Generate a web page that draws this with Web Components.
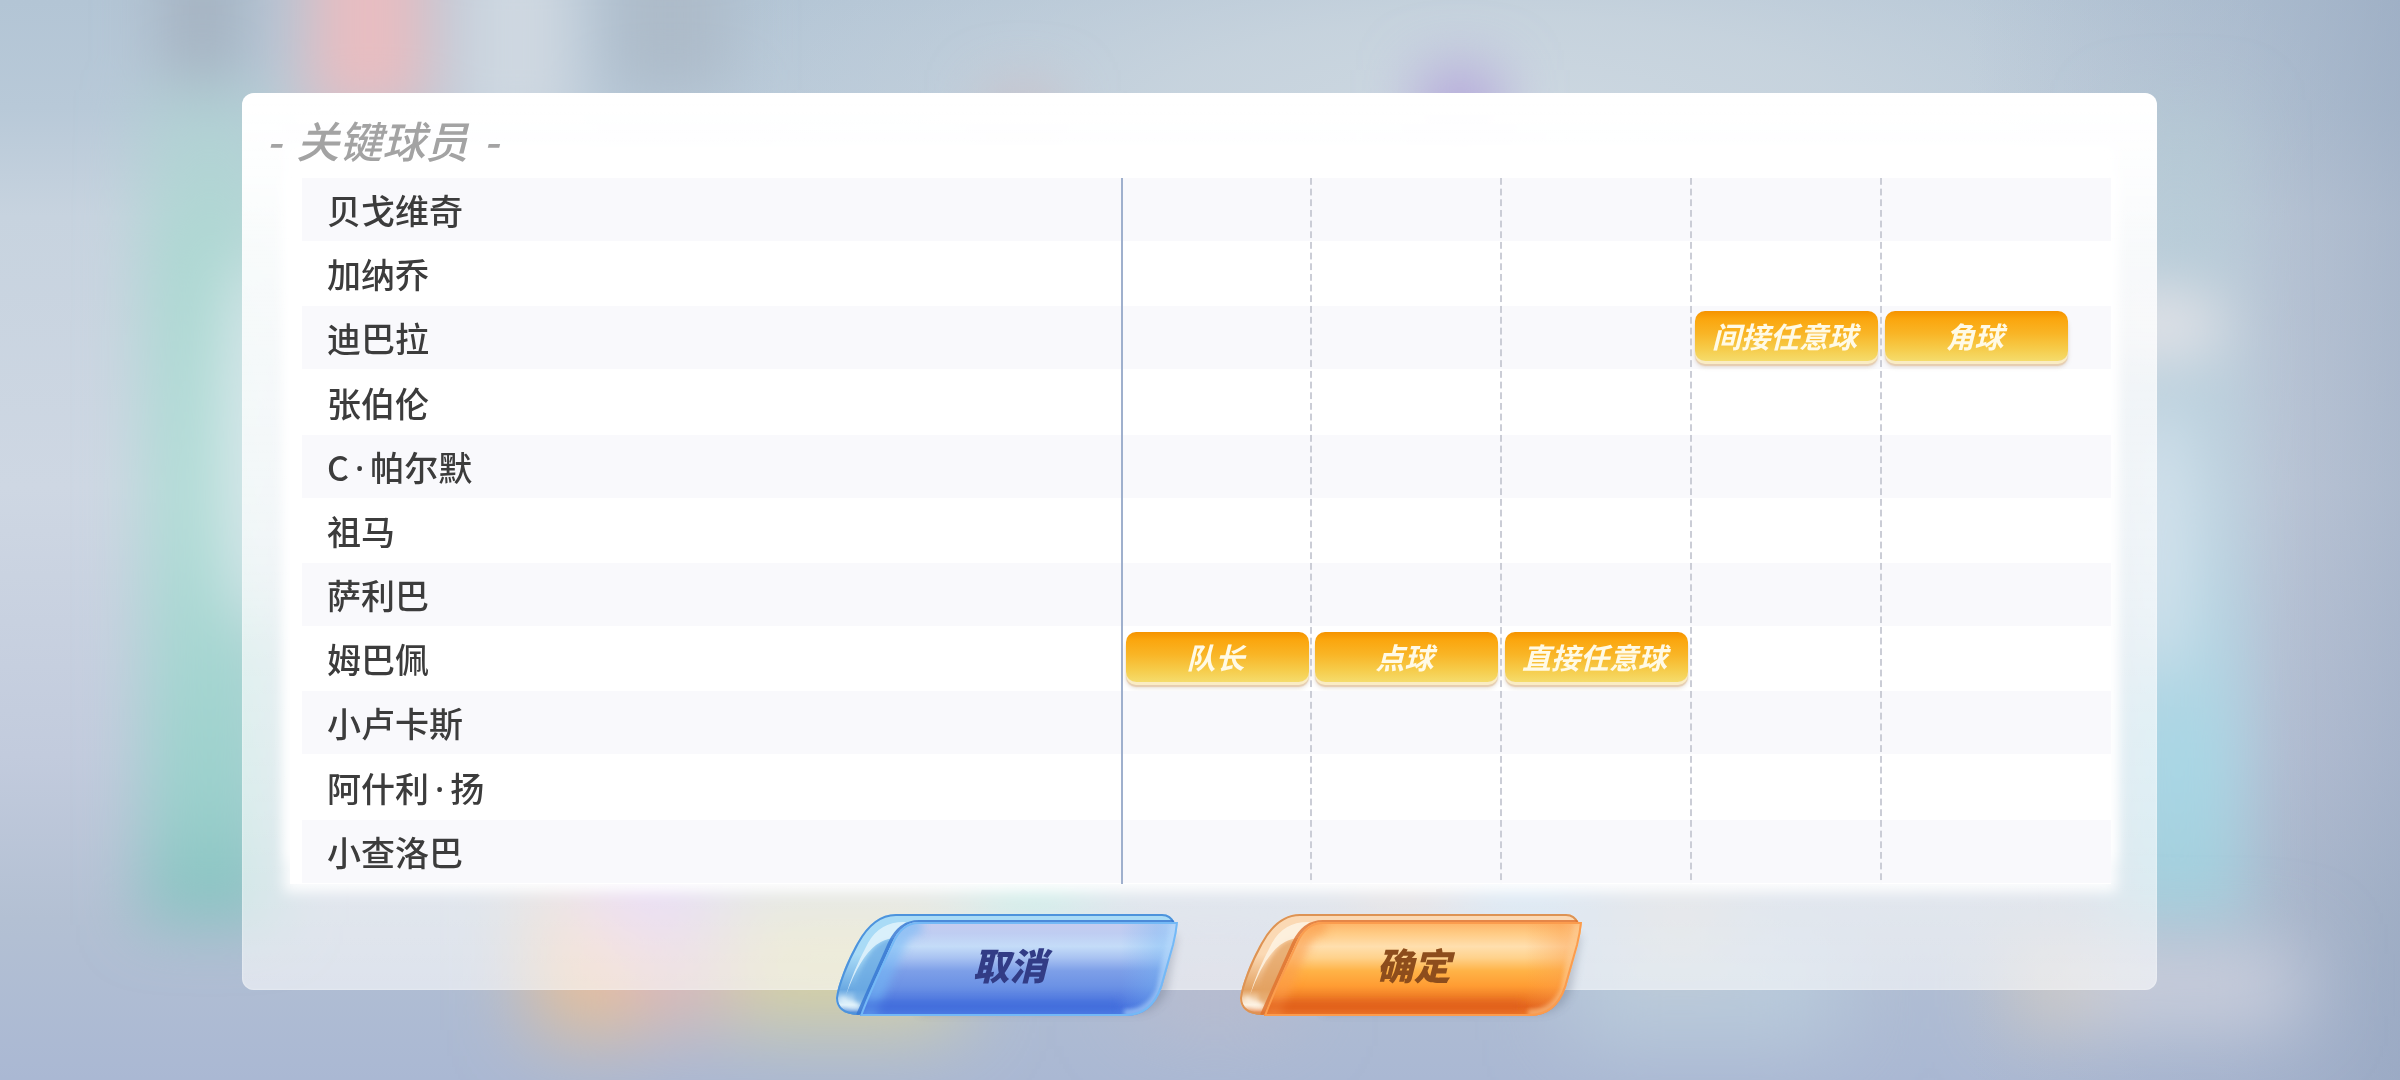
<!DOCTYPE html>
<html lang="zh-CN">
<head>
<meta charset="utf-8">
<meta name="viewport" content="width=device-width, initial-scale=1">
<title>关键球员</title>
<style>
    * { box-sizing: border-box; }

    body {
        margin: 0;
        min-height: 100vh;
        display: flex;
        background: #b9c5d7;
        font-family: "Noto Sans CJK SC", "Noto Sans", sans-serif;
        color: #3c3c3c;
    }

    main {
        flex: 1;
        display: flex;
        padding: 93px 243px 90px 242px;
    }
</style>
</head>
<body>
<blurred-backdrop></blurred-backdrop>
<main>
    <dialog-panel>
        <h2 slot="title"><span>-</span> <span>关键球员</span> <span>-</span></h2>
        <player-roles></player-roles>
        <glass-button slot="actions" tone="blue">取消</glass-button>
        <glass-button slot="actions" tone="orange">确定</glass-button>
    </dialog-panel>
</main>

<script>
    // Soft colour blobs behind the dialog
    class BlurredBackdrop extends HTMLElement {
        constructor() {
            super();
            this.attachShadow({ mode: 'open' });
            this.shadowRoot.innerHTML = `
                <style>
                    :host {
                        display: block;
                        position: fixed;
                        inset: 0;
                        z-index: -1;
                        overflow: hidden;
                    }

                    svg {
                        display: block;
                        width: 100%;
                        height: 100%;
                    }
                </style>
                <svg viewBox="0 0 2400 1080" preserveAspectRatio="none" aria-hidden="true">
                    <defs>
                        <linearGradient id="base" x1="0" y1="0" x2="0" y2="1">
                            <stop offset="0" stop-color="#b3c5d5"/>
                            <stop offset=".1" stop-color="#b8c9d8"/>
                            <stop offset=".2" stop-color="#c7d3df"/>
                            <stop offset=".45" stop-color="#ced7e3"/>
                            <stop offset=".7" stop-color="#c2cbdd"/>
                            <stop offset=".85" stop-color="#b3c0d3"/>
                            <stop offset="1" stop-color="#aab8d3"/>
                        </linearGradient>
                        <linearGradient id="shade" x1="0" y1="0" x2="1" y2="0">
                            <stop offset=".82" stop-color="#98a6bf" stop-opacity="0"/>
                            <stop offset=".93" stop-color="#98a6bf" stop-opacity=".3"/>
                            <stop offset="1" stop-color="#8f9fb9" stop-opacity=".55"/>
                        </linearGradient>
                        <radialGradient id="light">
                            <stop offset="0" stop-color="#cdd8e1"/>
                            <stop offset=".4" stop-color="#c8d4de" stop-opacity=".9"/>
                            <stop offset="1" stop-color="#c4d0dc" stop-opacity="0"/>
                        </radialGradient>
                        <linearGradient id="teal" x1="0" y1="0" x2="0" y2="1">
                            <stop offset="0" stop-color="#acd4d0" stop-opacity=".5"/>
                            <stop offset=".2" stop-color="#acd8d2" stop-opacity=".95"/>
                            <stop offset=".5" stop-color="#b2dcd7"/>
                            <stop offset=".85" stop-color="#9bd0cc"/>
                            <stop offset="1" stop-color="#86c0c0"/>
                        </linearGradient>
                        <linearGradient id="cyan" x1="0" y1="0" x2="0" y2="1">
                            <stop offset="0" stop-color="#b4cdd5" stop-opacity=".4"/>
                            <stop offset=".5" stop-color="#bdd5e2" stop-opacity=".9"/>
                            <stop offset=".8" stop-color="#a9d7e5"/>
                            <stop offset="1" stop-color="#a2ccda"/>
                        </linearGradient>
                        <filter id="b30" x="-100%" y="-100%" width="300%" height="300%"><feGaussianBlur stdDeviation="30"/></filter>
                        <filter id="b40" x="-100%" y="-100%" width="300%" height="300%"><feGaussianBlur stdDeviation="40"/></filter>
                    </defs>
                    <rect width="2400" height="1080" fill="url(#base)"/>
                    <ellipse cx="1500" cy="120" rx="850" ry="260" fill="url(#light)"/>
                    <rect width="2400" height="1080" fill="url(#shade)"/>
                    <g filter="url(#b30)">
                        <rect x="142" y="90" width="135" height="835" fill="url(#teal)"/>
                        <ellipse cx="254" cy="440" rx="26" ry="190" fill="#dcebee"/>
                        <rect x="160" y="-60" width="85" height="140" fill="#a6b4c2"/>
                        <rect x="308" y="-90" width="122" height="205" fill="#e8bdc1"/>
                        <rect x="460" y="-60" width="115" height="200" fill="#cfd8e1"/>
                        <rect x="610" y="-60" width="120" height="150" fill="#adbbc9"/>
                        <rect x="990" y="90" width="65" height="60" fill="#cbbdc4"/>
                        <rect x="1422" y="70" width="76" height="80" fill="#b2a2da"/>
                        <rect x="2110" y="100" width="135" height="830" fill="url(#cyan)"/>
                        <ellipse cx="2162" cy="325" rx="64" ry="28" fill="#e8e6ea"/>
                        <ellipse cx="2160" cy="540" rx="24" ry="140" fill="#d8e6f0"/>
                    </g>
                    <g filter="url(#b40)">
                        <rect x="535" y="880" width="125" height="150" fill="#ecc090"/>
                        <rect x="640" y="930" width="110" height="90" fill="#dcb8b8"/>
                        <rect x="590" y="820" width="110" height="120" fill="#cbaeec"/>
                        <rect x="730" y="900" width="230" height="125" fill="#d8d2a2"/>
                        <rect x="980" y="820" width="100" height="100" fill="#86e2ca"/>
                        <rect x="1140" y="960" width="150" height="60" fill="#bcbccd"/>
                        <rect x="1370" y="850" width="70" height="60" fill="#e6c3ae"/>
                        <rect x="1470" y="830" width="100" height="100" fill="#aed2ee"/>
                        <rect x="1570" y="930" width="270" height="110" fill="#b9cbdc"/>
                        <rect x="1640" y="870" width="80" height="90" fill="#c9c9c9"/>
                        <rect x="2010" y="945" width="90" height="80" fill="#d6cdc2"/>
                        <rect x="2090" y="950" width="210" height="70" fill="#d0d3df"/>
                    </g>
                </svg>
            `;
        }
    }

    // White glass sheet with a title, a body and an action row that hangs over its lower edge
    class DialogPanel extends HTMLElement {
        constructor() {
            super();
            this.attachShadow({ mode: 'open' });
            this.shadowRoot.innerHTML = `
                <style>
                    :host {
                        flex: 1;
                        min-width: 0;
                        display: flex;
                        flex-direction: column;
                        border-radius: 12px;
                        background: linear-gradient(
                            rgba(255, 255, 255, 1) 0%,
                            rgba(255, 255, 255, .96) 10%,
                            rgba(255, 255, 255, .78) 30%,
                            rgba(255, 255, 255, .66) 60%,
                            rgba(255, 255, 255, .58) 100%
                        );
                        box-shadow: inset 0 0 2px rgba(255, 255, 255, .7);
                    }

                    header {
                        box-sizing: border-box;
                        position: relative;
                        z-index: 1;
                        display: flex;
                        align-items: center;
                        height: 85px;
                        padding: 6px 24px 0;
                    }

                    ::slotted(h2) {
                        display: flex;
                        gap: 15px;
                        margin: 0;
                        font-size: 43px;
                        line-height: 56px;
                        font-weight: 500;
                        font-style: italic;
                        color: #a3a3a3;
                    }

                    .body {
                        flex: 1;
                        display: grid;
                        margin: 0 46px 0 48px;
                        padding-left: 12px;
                        background: #fff;
                        box-shadow: 0 2px 12px 6px rgba(255, 255, 255, .9), 0 -28px 12px 4px #fff;
                    }

                    footer {
                        display: flex;
                        justify-content: center;
                        gap: 60px;
                        margin: 27px 0 -27px;
                        padding-left: 16px;
                    }
                </style>
                <header><slot name="title"></slot></header>
                <div class="body"><slot></slot></div>
                <footer><slot name="actions"></slot></footer>
            `;
        }
    }

    class PlayerRoles extends HTMLElement {
        static roles = ['队长', '点球', '直接任意球', '间接任意球', '角球'];

        static players = [
            { name: '贝戈维奇', roles: [] },
            { name: '加纳乔', roles: [] },
            { name: '迪巴拉', roles: ['间接任意球', '角球'] },
            { name: '张伯伦', roles: [] },
            { name: 'C·帕尔默', roles: [] },
            { name: '祖马', roles: [] },
            { name: '萨利巴', roles: [] },
            { name: '姆巴佩', roles: ['队长', '点球', '直接任意球'] },
            { name: '小卢卡斯', roles: [] },
            { name: '阿什利·扬', roles: [] },
            { name: '小查洛巴', roles: [] }
        ];

        constructor() {
            super();
            this.attachShadow({ mode: 'open' });
            this.shadowRoot.innerHTML = `
                <style>
                    :host {
                        display: grid;
                        min-width: 0;
                    }

                    table {
                        width: 100%;
                        table-layout: fixed;
                        border-collapse: collapse;
                    }

                    .role { width: 190px; }
                    .role:nth-child(2) { width: 189px; }
                    .role:last-child { width: 231px; }

                    th, td {
                        height: 64px;
                        padding: 0;
                        vertical-align: middle;
                    }

                    tr:nth-child(odd) {
                        background: linear-gradient(#f9f9fc, #f9f9fc) top / 100% 63px no-repeat;
                    }

                    th {
                        padding-left: 25px;
                        text-align: left;
                        font-size: 34px;
                        line-height: 48px;
                        font-weight: 500;
                    }

                    /* the CJK font draws this dot a full square wide */
                    .dot {
                        padding: 0 6px;
                        font-family: "Noto Sans", sans-serif;
                        line-height: 1;
                    }

                    /* dashes repeat a whole number of times in each row, so they line up */
                    td {
                        padding-left: 5px;
                        background: linear-gradient(#cbcdd6 65%, transparent 65%) left top / 2px 11px;
                        background-repeat: no-repeat round;
                    }

                    td:nth-child(2) {
                        background: linear-gradient(#9fb0cd, #9fb0cd) left top / 2px 100% no-repeat;
                    }
                </style>
                <table>
                    <colgroup></colgroup>
                    <tbody></tbody>
                </table>
            `;
        }

        connectedCallback() {
            const { roles, players } = PlayerRoles;
            this.shadowRoot.querySelector('colgroup').innerHTML =
                '<col>' + roles.map(() => '<col class="role">').join('');
            this.shadowRoot.querySelector('tbody').innerHTML = players.map(player => `
                <tr>
                    <th scope="row">${player.name.replace('·', '<span class="dot">·</span>')}</th>
                    ${roles.map(role => `<td>${player.roles.includes(role) ? `<role-tag>${role}</role-tag>` : ''}</td>`).join('')}
                </tr>
            `).join('');
        }
    }

    class RoleTag extends HTMLElement {
        constructor() {
            super();
            this.attachShadow({ mode: 'open' });
            this.shadowRoot.innerHTML = `
                <style>
                    :host {
                        display: block;
                        box-sizing: border-box;
                        width: 183px;
                        height: 50px;
                        margin-bottom: 4px;
                        padding-right: 4px;
                        border-radius: 10px;
                        background: linear-gradient(#f59300, #fba60e 16%, #f9b526 45%, #f6cb49 75%, #f5dc6c);
                        box-shadow: 0 3px 0 #faecc4, 0 5px 1px #e6cdb0, 0 6px 4px rgba(150, 120, 80, .25);
                        text-align: center;
                        font-size: 29px;
                        line-height: 48px;
                        font-weight: 700;
                        font-style: italic;
                        color: #fffae6;
                        white-space: nowrap;
                    }
                </style>
                <slot></slot>
            `;
        }
    }

    // Slanted glossy button: a back plate that shows at the left and top, and a front plate over it
    class GlassButton extends HTMLElement {
        static tones = {
            blue: {
                text: '#323c86',
                edge: '#4d93dc', rim: '#a9dbf6', deep: '#3576d2', shine: '#e2f3fb', glow: '#6aa9e2',
                border: '#74b9f6', side: '#b5d8fb', low: '#3f6cdc',
                stops: ['#c6ccee', '#bfcdf2', '#c4dcf8', '#a9c3f2', '#7d9fe8', '#6c92e5', '#4872de', '#4f80e6']
            },
            orange: {
                text: '#8d4d1c',
                edge: '#dd9354', rim: '#fbd9b4', deep: '#e0702c', shine: '#fdf3e4', glow: '#e3a262',
                border: '#fb9c4e', side: '#fdcb92', low: '#e0611c',
                stops: ['#fdb366', '#ffcb84', '#ffdfae', '#ffd28c', '#ffb347', '#ff9c33', '#e3641d', '#ee7a2c']
            }
        };

        constructor() {
            super();
            this.attachShadow({ mode: 'open' });
        }

        connectedCallback() {
            const tone = GlassButton.tones[this.getAttribute('tone')] || GlassButton.tones.blue;
            const offsets = [0, .12, .26, .38, .52, .68, .9, 1];
            const back = 'M62 3H328Q337 3 341 12L200 60 24 104Q2 103 2 87Q3 78 9 62C14 49 18 41 23 32Q39 3 62 3Z';
            const front = 'M85 11H344Q343 22 340 34L328 76Q318 105 292 105H26Q30 93 41 69L58 32Q67 11 85 11Z';

            this.shadowRoot.innerHTML = `
                <style>
                    :host { display: block; }

                    button {
                        display: grid;
                        place-items: center;
                        padding: 0;
                        border: 0;
                        background: none;
                        font: italic 900 37px/52px "Noto Sans CJK SC", sans-serif;
                        color: ${tone.text};
                        cursor: pointer;
                    }

                    svg, span { grid-area: 1 / 1; }

                    svg {
                        display: block;
                        overflow: visible;
                    }

                    span { padding-left: 8px; }
                </style>
                <button type="button">
                    <svg width="344" height="106" viewBox="0 0 344 106" aria-hidden="true">
                        <defs>
                            <linearGradient id="face" x1="0" y1="0" x2="0" y2="1">
                                ${offsets.map((o, i) => `<stop offset="${o}" stop-color="${tone.stops[i]}"/>`).join('')}
                            </linearGradient>
                            <linearGradient id="plate" x1="0" y1="0" x2="0" y2="1">
                                <stop offset="0" stop-color="${tone.rim}"/>
                                <stop offset=".4" stop-color="${tone.rim}"/>
                                <stop offset=".75" stop-color="${tone.glow}"/>
                                <stop offset=".9" stop-color="${tone.shine}"/>
                                <stop offset="1" stop-color="${tone.deep}"/>
                            </linearGradient>
                            <linearGradient id="side" x1="0" y1="0" x2="1" y2="0">
                                <stop offset=".82" stop-color="${tone.border}" stop-opacity="0"/>
                                <stop offset=".93" stop-color="${tone.border}" stop-opacity=".35"/>
                                <stop offset="1" stop-color="${tone.side}" stop-opacity=".8"/>
                            </linearGradient>
                            <clipPath id="clip-face"><path d="${front}"/></clipPath>
                            <clipPath id="clip-back"><path d="${back}"/></clipPath>
                            <filter id="soft" x="-20%" y="-50%" width="140%" height="200%"><feGaussianBlur stdDeviation="2"/></filter>
                            <filter id="low" x="0" y="70" width="344" height="50" filterUnits="userSpaceOnUse"><feGaussianBlur stdDeviation="4"/></filter>
                            <filter id="softer" x="-20%" y="-20%" width="140%" height="140%"><feGaussianBlur stdDeviation="5"/></filter>
                        </defs>
                        <path d="M80 24H338L328 80Q318 102 296 102H80Z" fill="#5a6478" opacity=".3" filter="url(#softer)" transform="translate(5 0)"/>
                        <path d="${back}" fill="url(#plate)"/>
                        <g clip-path="url(#clip-back)">
                            <path d="M58 28Q38 28 24 66Q14 92 30 100L66 30Z" fill="${tone.glow}" opacity=".75" filter="url(#soft)"/>
                            <path d="M72 11Q46 10 34 32Q18 62 12 84Q26 46 42 34Q50 28 60 27Z" fill="${tone.shine}" opacity=".85"/>
                            <path d="M8 86Q14 98 26 94" fill="none" stroke="${tone.shine}" stroke-width="6" opacity=".7" filter="url(#soft)"/>
                            <path d="${back}" fill="none" stroke="${tone.edge}" stroke-width="4"/>
                            <path d="M24 104L56 32Q66 11 85 11H342" fill="none" stroke="${tone.deep}" stroke-width="4" opacity=".8"/>
                        </g>
                        <path d="${front}" fill="url(#face)"/>
                        <g clip-path="url(#clip-face)">
                            <path d="${front}" fill="url(#side)"/>
                            <path d="M32 104L62 34Q70 14 88 14" fill="none" stroke="${tone.border}" stroke-width="18" opacity=".6" filter="url(#softer)"/>
                            <path d="M20 95H284" stroke="${tone.low}" stroke-width="10" opacity=".7" filter="url(#low)"/>
                            <path d="M340 14L326 78Q316 102 290 102" fill="none" stroke="${tone.side}" stroke-width="7" opacity=".6" filter="url(#soft)"/>
                            <path d="${front}" fill="none" stroke="${tone.border}" stroke-width="4"/>
                        </g>
                    </svg>
                    <span><slot></slot></span>
                </button>
            `;
        }
    }

    customElements.define('blurred-backdrop', BlurredBackdrop);
    customElements.define('dialog-panel', DialogPanel);
    customElements.define('role-tag', RoleTag);
    customElements.define('player-roles', PlayerRoles);
    customElements.define('glass-button', GlassButton);
</script>
</body>
</html>
